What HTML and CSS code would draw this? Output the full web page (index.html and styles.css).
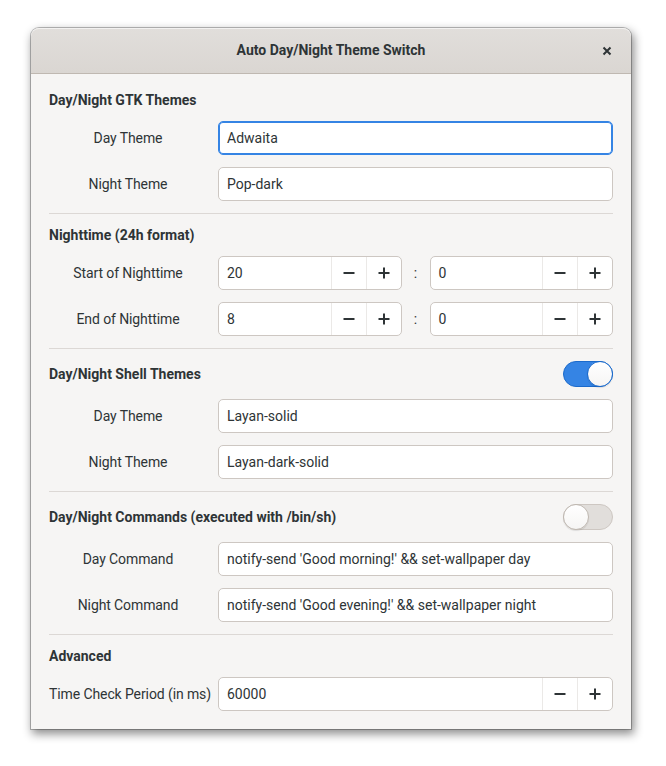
FILE: index.html
```html
<!DOCTYPE html>
<html>
<head>
<meta charset="utf-8">
<link rel="stylesheet" href="styles.css">
</head>
<body>
<div class="desktop">
  <div class="window">
    <div class="titlebar">
      <span></span>
      <span class="title">Auto Day/Night Theme Switch</span>
      <span class="close"><svg width="10" height="10" viewBox="0 0 10 10"><path d="M1.5 1.5L8.5 8.5M8.5 1.5L1.5 8.5" stroke="#2e3436" stroke-width="2" stroke-linecap="butt"/></svg></span>
    </div>
    <div class="content">
      <div class="header">Day/Night GTK Themes</div>
      <div class="label">Day Theme</div>
      <div class="entry focus">Adwaita</div>
      <div class="label">Night Theme</div>
      <div class="entry">Pop-dark</div>
      <div class="sep"></div>

      <div class="header">Nighttime (24h format)</div>
      <div class="label">Start of Nighttime</div>
      <div class="time">
        <div class="spin"><span class="val">20</span><span class="btn"><svg width="12" height="12" viewBox="0 0 12 12"><path d="M0.5 6H11.5" stroke="#2e3436" stroke-width="2"/></svg></span><span class="btn"><svg width="12" height="12" viewBox="0 0 12 12"><path d="M0.5 6H11.5M6 0.5V11.5" stroke="#2e3436" stroke-width="2"/></svg></span></div>
        <span class="colon">:</span>
        <div class="spin"><span class="val">0</span><span class="btn"><svg width="12" height="12" viewBox="0 0 12 12"><path d="M0.5 6H11.5" stroke="#2e3436" stroke-width="2"/></svg></span><span class="btn"><svg width="12" height="12" viewBox="0 0 12 12"><path d="M0.5 6H11.5M6 0.5V11.5" stroke="#2e3436" stroke-width="2"/></svg></span></div>
      </div>
      <div class="label">End of Nighttime</div>
      <div class="time">
        <div class="spin"><span class="val">8</span><span class="btn"><svg width="12" height="12" viewBox="0 0 12 12"><path d="M0.5 6H11.5" stroke="#2e3436" stroke-width="2"/></svg></span><span class="btn"><svg width="12" height="12" viewBox="0 0 12 12"><path d="M0.5 6H11.5M6 0.5V11.5" stroke="#2e3436" stroke-width="2"/></svg></span></div>
        <span class="colon">:</span>
        <div class="spin"><span class="val">0</span><span class="btn"><svg width="12" height="12" viewBox="0 0 12 12"><path d="M0.5 6H11.5" stroke="#2e3436" stroke-width="2"/></svg></span><span class="btn"><svg width="12" height="12" viewBox="0 0 12 12"><path d="M0.5 6H11.5M6 0.5V11.5" stroke="#2e3436" stroke-width="2"/></svg></span></div>
      </div>
      <div class="sep"></div>

      <div class="header"><span>Day/Night Shell Themes</span><span class="switch on"><span class="knob"></span></span></div>
      <div class="label">Day Theme</div>
      <div class="entry">Layan-solid</div>
      <div class="label">Night Theme</div>
      <div class="entry">Layan-dark-solid</div>
      <div class="sep"></div>

      <div class="header"><span>Day/Night Commands (executed with /bin/sh)</span><span class="switch off"><span class="knob"></span></span></div>
      <div class="label">Day Command</div>
      <div class="entry">notify-send 'Good morning!' &amp;&amp; set-wallpaper day</div>
      <div class="label">Night Command</div>
      <div class="entry">notify-send 'Good evening!' &amp;&amp; set-wallpaper night</div>
      <div class="sep"></div>

      <div class="header">Advanced</div>
      <div class="label">Time Check Period (in ms)</div>
      <div class="spin"><span class="val">60000</span><span class="btn"><svg width="12" height="12" viewBox="0 0 12 12"><path d="M0.5 6H11.5" stroke="#2e3436" stroke-width="2"/></svg></span><span class="btn"><svg width="12" height="12" viewBox="0 0 12 12"><path d="M0.5 6H11.5M6 0.5V11.5" stroke="#2e3436" stroke-width="2"/></svg></span></div>
    </div>
  </div>
</div>
</body>
</html>
```
FILE: styles.css
```css
* { box-sizing: border-box; }
html, body { margin: 0; padding: 0; background: #ffffff; }
body {
  font-family: Roboto, "Open Sans", sans-serif;
  font-size: 14px;
  color: #2e3436;
}
.desktop {
  padding: 28px 35px 38px 31px;
}
.window {
  width: 600px;
  background: #f6f5f4;
  border-radius: 8px 8px 0 0;
  box-shadow: 0 0 0 1px rgba(0,0,0,0.25), 2px 4px 10px 1px rgba(0,0,0,0.45);
  overflow: hidden;
}
.titlebar {
  height: 46px;
  background: linear-gradient(#e1dedb, #dad6d2);
  border-bottom: 1px solid #bfb8b1;
  display: grid;
  grid-template-columns: 1fr auto 1fr;
  align-items: center;
  border-radius: 8px 8px 0 0;
  box-shadow: inset 0 1px rgba(255,255,255,0.6);
}
.title {
  font-weight: bold;
  font-size: 14px;
  margin-top: -2px;
}
.close {
  justify-self: end;
  margin-right: 19px;
  display: flex;
}
.content {
  padding: 17px 18px 18px;
  display: grid;
  grid-template-columns: 158px 1fr;
  column-gap: 11px;
  row-gap: 12px;
}
.header {
  grid-column: 1 / -1;
  font-weight: bold;
  line-height: 18px;
  display: flex;
  justify-content: space-between;
  align-items: center;
}
.label {
  text-align: center;
  align-self: center;
  white-space: nowrap;
  letter-spacing: -0.1px;
}
.sep {
  grid-column: 1 / -1;
  height: 1px;
  background: #dcd8d5;
}
.entry {
  height: 34px;
  background: #ffffff;
  border: 1px solid #cdc7c2;
  border-radius: 5px;
  padding: 0 8px;
  display: flex;
  align-items: center;
  white-space: nowrap;
}
.entry.focus {
  border-color: #3584e4;
  box-shadow: inset 0 0 0 1px #3584e4;
}
.time {
  display: flex;
  align-items: center;
}
.time .spin { flex: 1; }
.colon {
  width: 28px;
  text-align: center;
  color: #2e3436;
}
.spin {
  height: 34px;
  background: #ffffff;
  border: 1px solid #cdc7c2;
  border-radius: 5px;
  display: flex;
  align-items: stretch;
}
.val {
  flex: 1;
  padding-left: 8px;
  display: flex;
  align-items: center;
}
.btn {
  width: 35px;
  border-left: 1px solid #ebe9e7;
  display: flex;
  align-items: center;
  justify-content: center;
}
.switch {
  width: 50px;
  height: 26px;
  border-radius: 13px;
  display: flex;
  align-items: center;
  border: 1px solid;
}
.switch.on {
  background: #3584e4;
  border-color: #1b6acb;
  justify-content: flex-end;
}
.switch.off {
  background: #e1dedb;
  border-color: #cdc7c2;
  justify-content: flex-start;
}
.knob {
  width: 26px;
  height: 26px;
  margin: -1px;
  border-radius: 50%;
  background: linear-gradient(#ffffff, #f6f5f4);
  border: 1px solid #bfb8b1;
  box-shadow: 0 1px 1px rgba(0,0,0,0.1);
}
.switch.on .knob { border-color: #1b6acb; }
```
